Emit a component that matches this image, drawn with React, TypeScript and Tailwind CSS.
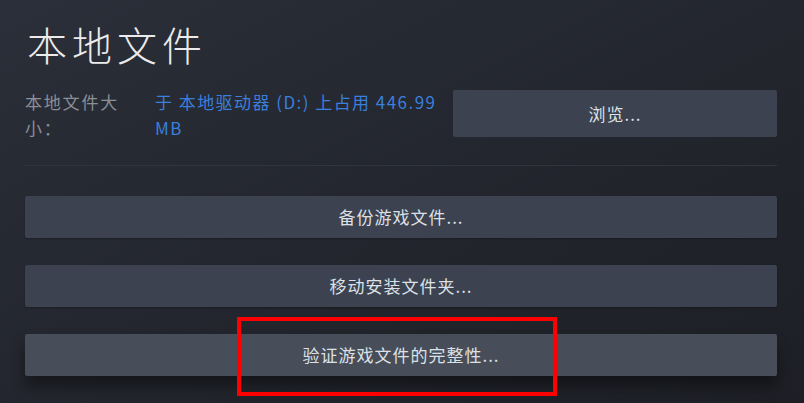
import React from 'react'

const font = { fontFamily: '"Noto Sans CJK SC", "Noto Sans", sans-serif' }

function ActionButton({ label, active = false }: { label: string; active?: boolean }) {
  return (
    <button
      className={
        'flex h-[42px] w-full items-center justify-center rounded-[2px] text-[17px] tracking-[1px] text-[#dde1e6] ' +
        (active
          ? 'bg-[#474d59] shadow-[0_10px_14px_rgba(0,0,0,0.4)]'
          : 'bg-[#3c4250] shadow-[0_1px_2px_rgba(0,0,0,0.25)]')
      }
    >
      {label}
    </button>
  )
}

export default function App() {
  return (
    <div
      style={font}
      className="h-[403px] w-[804px] overflow-hidden bg-gradient-to-br from-[#2b2f39] via-[#23262e] to-[#1d1f25] pl-[25px] pr-[27px]"
    >
      {/* header */}
      <h1 className="pt-[22px] pl-[2px] text-[40px] font-light leading-[44px] tracking-[5px] text-[#ebebeb]">
        本地文件
      </h1>

      {/* size row */}
      <div className="mt-[23px] flex items-start">
        <div className="w-[130px] pr-[25px] text-[17px] leading-[26px] tracking-[1.8px] text-[#8a8f98]">
          本地文件大小：
        </div>
        <div className="flex-1 text-[17px] leading-[26px] tracking-[1.45px] text-[#3a7fdc]">
          于 本地驱动器 (D:) 上占用 446.99
          <br />
          MB
        </div>
        <button className="mt-[1px] flex h-[47px] w-[324px] items-center justify-center rounded-[2px] bg-[#3c4250] text-[17px] tracking-[1px] text-[#dde1e6]">
          浏览...
        </button>
      </div>

      <div className="mt-[24px] h-px bg-[#30343d]" />

      {/* actions */}
      <div className="mt-[30px] flex flex-col gap-[27px]">
        <ActionButton label="备份游戏文件..." />
        <ActionButton label="移动安装文件夹..." />
        <div className="relative">
          <ActionButton label="验证游戏文件的完整性..." active />
          <div className="pointer-events-none absolute left-[212px] top-[-17px] h-[79px] w-[320px] border-[4px] border-[#ff0000]" />
        </div>
      </div>
    </div>
  )
}
